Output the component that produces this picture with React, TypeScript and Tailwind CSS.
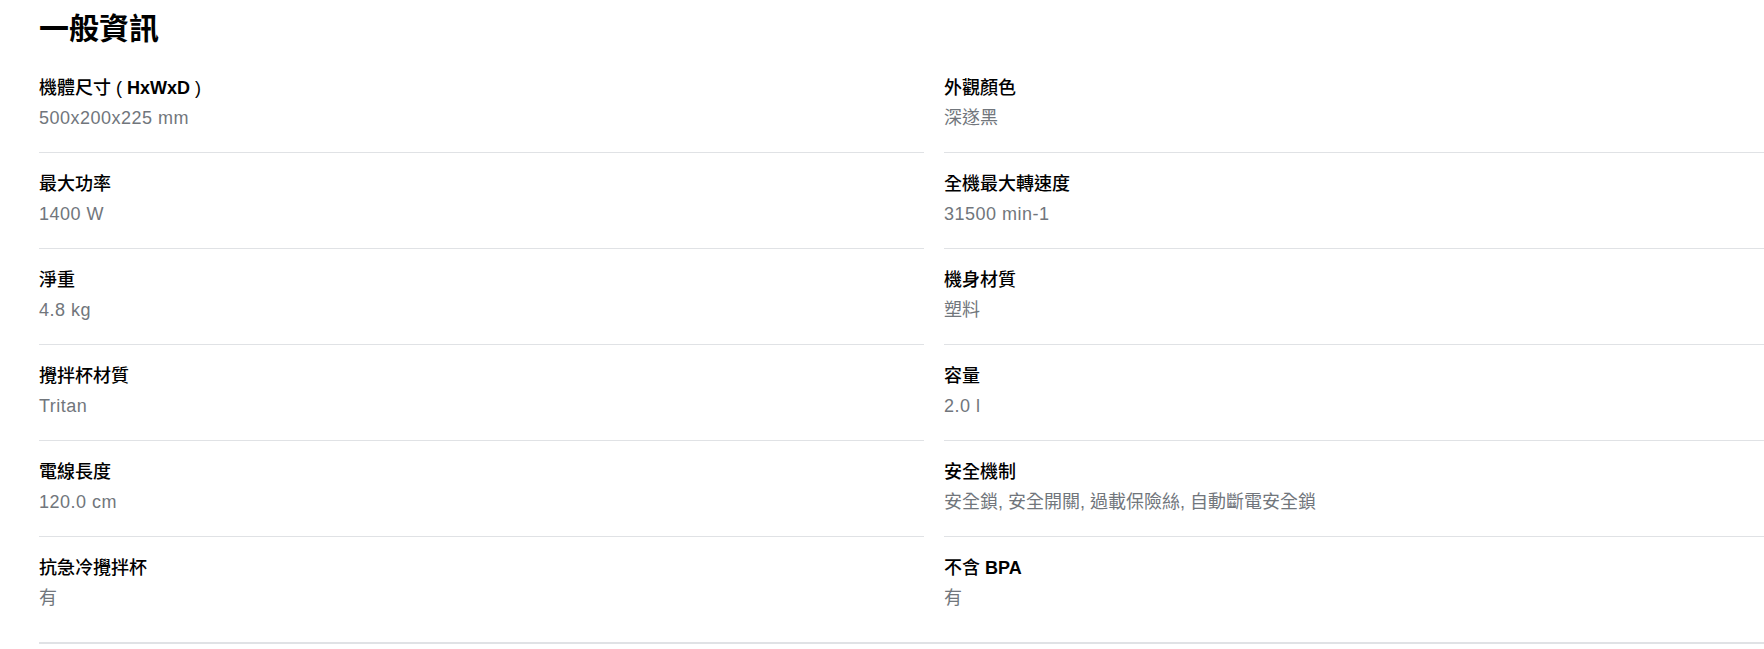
const SPECS = [
  { label: "機體尺寸 ( ", bold: "HxWxD", tail: " )", value: "500x200x225 mm" },
  { label: "外觀顏色", value: "深遂黑" },
  { label: "最大功率", value: "1400 W" },
  { label: "全機最大轉速度", value: "31500 min-1" },
  { label: "淨重", value: "4.8 kg" },
  { label: "機身材質", value: "塑料" },
  { label: "攪拌杯材質", value: "Tritan" },
  { label: "容量", value: "2.0 l" },
  { label: "電線長度", value: "120.0 cm" },
  { label: "安全機制", value: "安全鎖, 安全開關, 過載保險絲, 自動斷電安全鎖" },
  { label: "抗急冷攪拌杯", value: "有" },
  { label: "不含 ", bold: "BPA", value: "有" },
];

const isLatin = (s: string) => /^[\x00-\x7f]+$/.test(s);

export default function App() {
  const lastRowStart = SPECS.length - 2;

  return (
    <main
      className="min-h-screen w-full overflow-hidden bg-white"
      style={{ fontFamily: '"Liberation Sans", "Noto Sans CJK TC", sans-serif' }}
    >
      <div className="w-[1830px] pl-[39px]">
        <h2 className="pt-[9px] text-[30px] font-bold leading-[40px] text-black">
          一般資訊
        </h2>

        {/* 規格 */}
        <div className="mt-[8px] grid grid-cols-[885px_885px] gap-x-5 border-b-2 border-[#e0e2e5] pb-[10px]">
          {SPECS.map((s, i) => (
            <div
              key={i}
              className={`pt-[18px] pb-[21px] ${i < lastRowStart ? "border-b border-[#e0e2e5]" : ""}`}
            >
              <p className="text-[18px] font-medium leading-[26px] text-[#000]">
                {s.label}
                {s.bold && <span className="font-bold">{s.bold}</span>}
                {s.tail}
              </p>
              <p
                className={`mt-1 text-[18px] leading-[26px] text-[#71767c] ${
                  isLatin(s.value) ? "tracking-[0.5px]" : ""
                }`}
              >
                {s.value}
              </p>
            </div>
          ))}
        </div>
      </div>
    </main>
  );
}
